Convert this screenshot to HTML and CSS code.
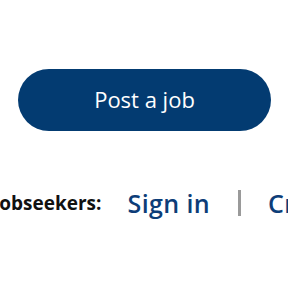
FILE: index.html
```html
<!DOCTYPE html>
<html>
<head>
<meta charset="utf-8">
<link rel="stylesheet" href="styles.css">
</head>
<body>
<div class="page">
  <a class="post-btn" href="#">Post a job</a>
  <div class="seekers">
    <span class="label">Jobseekers:</span>
    <a class="link" href="#">Sign in</a>
    <span class="sep"></span>
    <a class="link" href="#">Create account</a>
  </div>
</div>
</body>
</html>
```
FILE: styles.css
```css
html, body {
  margin: 0;
  padding: 0;
  background: #ffffff;
}
.page {
  width: 288px;
  height: 288px;
  overflow: hidden;
  font-family: "Open Sans", "Noto Sans", sans-serif;
}
.post-btn {
  display: flex;
  align-items: center;
  justify-content: center;
  box-sizing: border-box;
  width: 253px;
  height: 62px;
  margin: 69px 0 0 18px;
  border-radius: 31px;
  background: #033b71;
  color: #ffffff;
  text-decoration: none;
  font-size: 22px;
  font-weight: 400;
  padding-bottom: 2px;
}
.seekers {
  display: flex;
  align-items: center;
  white-space: nowrap;
  margin: 55px 0 0 -7px;
}
.seekers > * {
  flex-shrink: 0;
}
.label {
  font-size: 19px;
  font-weight: 700;
  color: #111111;
}
.link {
  font-size: 25px;
  font-weight: 600;
  letter-spacing: 0.4px;
  color: #0d3d78;
  text-decoration: none;
}
.label + .link {
  margin-left: 26px;
}
.sep {
  width: 3px;
  height: 26px;
  background: #9a9a9a;
  margin: 0 27px 0 28px;
}
```
